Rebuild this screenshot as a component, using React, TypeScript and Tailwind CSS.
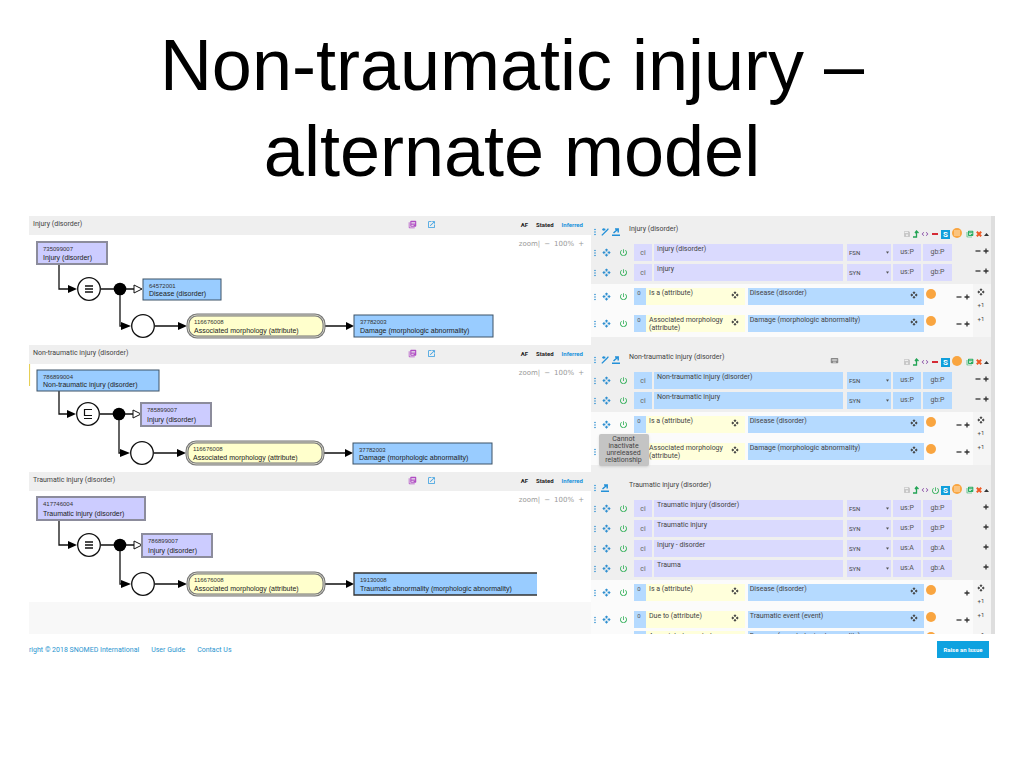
import type { ReactNode } from "react";
import {
  MdCode,
  MdKeyboard,
  MdLibraryBooks,
  MdMoreVert,
  MdOpenInNew,
  MdOpenWith,
  MdPowerSettingsNew,
  MdSave,
} from "react-icons/md";

type Fill = "lavender" | "sky";

type Box = { x: number; y: number; w: number; h: number; id: string; label: string; fill: Fill; open?: boolean };

type DiagramData = {
  title: string;
  height: number;
  shift: number;
  rowY: number;
  childY: number;
  subsumed?: boolean;
  marker?: boolean;
  boxes: Box[];
};

type Description = { term: string; type: string; us: string; gb: string };
type Relationship = { name: string; value: string; removable: boolean; tip?: string };

type Concept = {
  title: string;
  fill: Fill;
  wand: boolean;
  keyboard?: boolean;
  defined: boolean;
  power?: boolean;
  removable: boolean;
  descriptions: Description[];
  groups: Relationship[][];
};

const diagrams: DiagramData[] = [
  {
    title: "Injury (disorder)",
    height: 110,
    shift: 0,
    rowY: 54,
    childY: 91,
    boxes: [
      { x: 8, y: 7, w: 70, h: 22, id: "735099007", label: "Injury (disorder)", fill: "lavender" },
      { x: 114, y: 44, w: 78, h: 21, id: "64572001", label: "Disease (disorder)", fill: "sky" },
      { x: 325, y: 80, w: 139, h: 22, id: "37782003", label: "Damage (morphologic abnormality)", fill: "sky" },
    ],
  },
  {
    title: "Non-traumatic injury (disorder)",
    height: 108,
    shift: -1,
    rowY: 50,
    childY: 89,
    subsumed: true,
    marker: true,
    boxes: [
      { x: 8, y: 6, w: 122, h: 21, id: "786899004", label: "Non-traumatic injury (disorder)", fill: "sky" },
      { x: 112, y: 39, w: 70, h: 23, id: "785899007", label: "Injury (disorder)", fill: "lavender" },
      { x: 324, y: 79, w: 139, h: 21, id: "37782003", label: "Damage (morphologic abnormality)", fill: "sky" },
    ],
  },
  {
    title: "Traumatic injury (disorder)",
    height: 111,
    shift: 0,
    rowY: 54,
    childY: 93,
    boxes: [
      { x: 8, y: 6, w: 108, h: 23, id: "417746004", label: "Traumatic injury (disorder)", fill: "lavender" },
      { x: 113, y: 43, w: 70, h: 23, id: "786899007", label: "Injury (disorder)", fill: "lavender" },
      { x: 325, y: 82, w: 183, h: 22, id: "19130008", label: "Traumatic abnormality (morphologic abnormality)", fill: "sky", open: true },
    ],
  },
];

const isA: Relationship = { name: "Is a (attribute)", value: "Disease (disorder)", removable: true };
const morphology: Relationship = {
  name: "Associated morphology (attribute)",
  value: "Damage (morphologic abnormality)",
  removable: true,
};

const concepts: Concept[] = [
  {
    title: "Injury (disorder)",
    fill: "lavender",
    wand: true,
    defined: true,
    removable: true,
    descriptions: [
      { term: "Injury (disorder)", type: "FSN", us: "P", gb: "P" },
      { term: "Injury", type: "SYN", us: "P", gb: "P" },
    ],
    groups: [[isA], [morphology]],
  },
  {
    title: "Non-traumatic injury (disorder)",
    fill: "sky",
    wand: true,
    keyboard: true,
    defined: false,
    removable: true,
    descriptions: [
      { term: "Non-traumatic injury (disorder)", type: "FSN", us: "P", gb: "P" },
      { term: "Non-traumatic injury", type: "SYN", us: "P", gb: "P" },
    ],
    groups: [[{ ...isA, tip: "Cannot inactivate unreleased relationship" }], [morphology]],
  },
  {
    title: "Traumatic injury (disorder)",
    fill: "lavender",
    wand: false,
    defined: true,
    power: true,
    removable: false,
    descriptions: [
      { term: "Traumatic injury (disorder)", type: "FSN", us: "P", gb: "P" },
      { term: "Traumatic injury", type: "SYN", us: "P", gb: "P" },
      { term: "Injury - disorder", type: "SYN", us: "A", gb: "A" },
      { term: "Trauma", type: "SYN", us: "A", gb: "A" },
    ],
    groups: [
      [{ ...isA, removable: false }],
      [{ name: "Due to (attribute)", value: "Traumatic event (event)", removable: true }, morphology],
    ],
  },
];

const fieldFill = { lavender: "bg-[#dadafe]", sky: "bg-[#b5daff]" };

function IconButton({ label, className = "", children }: { label: string; className?: string; children: ReactNode }) {
  return (
    <button type="button" aria-label={label} className={`flex shrink-0 items-center justify-center ${className}`}>
      {children}
    </button>
  );
}

function DiagramBox({ x, y, w, h, id, label, fill, open }: Box) {
  const lavender = fill === "lavender";
  return (
    <g>
      <rect
        x={x}
        y={y}
        width={w}
        height={h}
        fill={lavender ? "#ccccff" : "#99ccff"}
        stroke={open ? "none" : lavender ? "#8c8c9c" : "#3d5266"}
        strokeWidth={lavender ? 2 : 1}
      />
      {open && <path d={`M${x + w} ${y}H${x}V${y + h}H${x + w}`} fill="none" stroke="#333" strokeWidth="1.3" />}
      <text x={x + 6} y={y + 9} fontSize="6" fill="#333">{id}</text>
      <text x={x + 6} y={y + h - 4} fontSize="7" fill="#222">{label}</text>
    </g>
  );
}

function Diagram({ height, shift, rowY, childY, subsumed, marker, boxes }: DiagramData) {
  const left = 60 + shift;
  const dot = 91 + shift;
  const child = 114 + shift;
  const pill = 159 + shift;
  const top = boxes[0].y + boxes[0].h;
  return (
    <svg width="560" height={height} viewBox={`0 0 560 ${height}`} className="block font-['Liberation_Sans',sans-serif]">
      {marker && <path d="M0.5 0V22" stroke="#e6cf55" strokeWidth="1.2" />}
      <g fill="none" stroke="#111" strokeWidth="1.3">
        <path d={`M30 ${top}V${rowY}H40`} />
        <circle cx={left} cy={rowY} r="11.3" fill="#fff" />
        <path d={`M${left + 12} ${rowY}H${dot}V${childY}H${dot + 4}M${dot} ${rowY}H${dot + 14}`} />
        <path d={`M${dot + 14} ${rowY - 4}L${dot + 22} ${rowY}L${dot + 14} ${rowY + 4}Z`} fill="#fff" strokeWidth="1" />
        <circle cx={child} cy={childY} r="11.3" fill="#fff" />
        <path d={`M${child + 12} ${childY}H${pill - 8}M${pill + 136} ${childY}H${pill + 158}`} />
        {subsumed ? (
          <path d={`M${left + 4} ${rowY - 4.5}H${left - 3.5}V${rowY + 1.5}H${left + 4}M${left - 4} ${rowY + 4.5}H${left + 4}`} strokeWidth="1.2" />
        ) : (
          <path d={`M${left - 4} ${rowY - 3}h8m-8 3h8m-8 3h8`} />
        )}
      </g>
      <g fill="#000">
        <circle cx={dot} cy={rowY} r="6.3" />
        <path d={`M${left - 21} ${rowY - 4}l9 4l-9 4z`} />
        <path d={`M${dot + 1} ${childY - 4}l10 4l-10 4z`} />
        <path d={`M${pill - 10} ${childY - 4}l9 4l-9 4z`} />
        <path d={`M${pill + 158} ${childY - 4}l8 4l-8 4z`} />
      </g>
      <rect x={pill} y={childY - 11} width="136" height="22" rx="9" fill="#ffffcc" stroke="#777" strokeWidth="3" />
      <rect x={pill} y={childY - 11} width="136" height="22" rx="9" fill="none" stroke="#d5d5c8" strokeWidth="1" />
      <text x={pill + 6} y={childY - 2} fontSize="6" fill="#333">116676008</text>
      <text x={pill + 6} y={childY + 7} fontSize="7" fill="#222">Associated morphology (attribute)</text>
      {boxes.map((box) => (
        <DiagramBox key={box.x} {...box} />
      ))}
    </svg>
  );
}

function DiagramCard(props: DiagramData) {
  return (
    <section className="relative overflow-hidden bg-white">
      <header className="flex h-[19px] items-center bg-[#efefef] pb-[2px] pl-1 pr-2">
        <h2 className="flex-1 pb-[2px] text-[7px] leading-[8px] text-[#444]">{props.title}</h2>
        <div className="flex items-center gap-[10px]">
          <IconButton label="Copy" className="text-[9px] text-[#b04cc4]"><MdLibraryBooks /></IconButton>
          <IconButton label="Open" className="text-[9px] text-[#2f9be0]"><MdOpenInNew /></IconButton>
        </div>
        <nav className="ml-[85px] flex gap-2 text-[6px] leading-[8px] font-bold text-[#222]">
          <button type="button">AF</button>
          <button type="button">Stated</button>
          <button type="button" className="text-[#1a93dc]">Inferred</button>
        </nav>
      </header>
      <Diagram {...props} />
      <div className="absolute right-[7px] top-6 flex items-center gap-1 font-['DejaVu_Sans',sans-serif] text-[7px] leading-[9px] text-[#999]">
        <span>zoom|</span>
        <button type="button">−</button>
        <span>100%</span>
        <button type="button">+</button>
      </div>
    </section>
  );
}

function RowTools({ tip }: { tip?: string }) {
  return (
    <div className="flex w-[43px] shrink-0 items-center text-[#2f8fd0]">
      <IconButton label="More" className="w-[7px] text-[10px]"><MdMoreVert className="shrink-0" /></IconButton>
      <IconButton label="Move" className="ml-1 w-2 text-[9px]"><MdOpenWith className="shrink-0" /></IconButton>
      <div className="relative ml-[9px]">
        <IconButton label="Inactivate" className="text-[9px] text-[#22aa4c]"><MdPowerSettingsNew /></IconButton>
        {tip && (
          <p role="tooltip" className="absolute left-1/2 top-[14px] z-10 w-[50px] -translate-x-1/2 rounded-[2px] bg-[#c4c4c4] px-1 py-[2px] text-center text-[7px] leading-[7px] text-[#444] shadow">
            {tip}
          </p>
        )}
      </div>
    </div>
  );
}

function PlusMinus({ removable }: { removable: boolean }) {
  return (
    <div className="flex shrink-0 items-center gap-[2px] text-[#333]">
      {removable && (
        <IconButton label="Remove">
          <svg width="6" height="6" viewBox="0 0 6 6"><path d="M0.5 3H5.5" stroke="currentColor" strokeWidth="1.3" /></svg>
        </IconButton>
      )}
      <IconButton label="Add">
        <svg width="6" height="6" viewBox="0 0 6 6"><path d="M0.5 3H5.5M3 0.5V5.5" stroke="currentColor" strokeWidth="1.3" /></svg>
      </IconButton>
    </div>
  );
}

function DescriptionRow({ row, fill, removable }: { row: Description; fill: Fill; removable: boolean }) {
  const bg = fieldFill[fill];
  return (
    <div className="mb-[3px] flex h-[17px] items-center gap-[2px] pr-[2px]">
      <div className="-mr-[2px]"><RowTools /></div>
      <button type="button" className={`h-full w-[18px] shrink-0 text-[7px] leading-[8px] text-[#666] ${bg}`}>ci</button>
      <textarea aria-label="Term" defaultValue={row.term} className={`h-full min-w-0 flex-1 resize-none overflow-hidden px-[3px] py-[1px] text-[7px] leading-[8px] text-[#444] ${bg}`} />
      <div className={`ml-[2px] flex h-full w-[44px] shrink-0 items-center px-[2px] ${bg}`}>
        <select aria-label="Type" defaultValue={row.type} className="h-full min-w-0 flex-1 appearance-none text-[6px] text-[#444]">
          <option>FSN</option>
          <option>SYN</option>
        </select>
        <svg width="3" height="3" viewBox="0 0 4 3" className="shrink-0"><path d="M0 0H4L2 3Z" fill="#555" /></svg>
      </div>
      <button type="button" className={`h-full w-[28px] shrink-0 text-[7px] text-[#555] ${bg}`}>us:{row.us}</button>
      <button type="button" className={`h-full w-[29px] shrink-0 text-[7px] text-[#555] ${bg}`}>gb:{row.gb}</button>
      <div className="flex w-[35px] shrink-0 justify-end pb-1"><PlusMinus removable={removable} /></div>
    </div>
  );
}

function RelationshipRow({ row, first }: { row: Relationship; first: boolean }) {
  return (
    <div className="flex h-[17px]">
      <RowTools tip={row.tip} />
      <span className="w-3 shrink-0 bg-[#b5daff] pr-[2px] pt-[1px] text-center text-[6px] leading-[8px] text-[#555]">0</span>
      <div className="flex min-w-0 flex-[97] items-start bg-[#ffffdb] pr-[6px]">
        <textarea aria-label="Attribute" defaultValue={row.name} className="h-full min-w-0 flex-1 resize-none overflow-hidden py-[1px] pl-[3px] text-[7px] leading-[8px] text-[#444]" />
        <IconButton label="Drag attribute" className="mt-[3px] text-[8px] text-[#444]"><MdOpenWith /></IconButton>
      </div>
      <div className="ml-[3px] flex min-w-0 flex-[178] items-start bg-[#b5daff] pr-[6px]">
        <textarea aria-label="Value" defaultValue={row.value} className="h-full min-w-0 flex-1 resize-none overflow-hidden py-[1px] pl-[2px] text-[7px] leading-[8px] text-[#444]" />
        <IconButton label="Drag value" className="mt-[3px] text-[8px] text-[#444]"><MdOpenWith /></IconButton>
      </div>
      <span className="ml-[2px] mt-[1px] size-[10px] shrink-0 rounded-full bg-[#f9a540]" />
      <div className="flex w-[37px] shrink-0 justify-end pr-[3px]"><PlusMinus removable={row.removable} /></div>
      <div className="flex w-[18px] shrink-0 flex-col items-center gap-[5px] pr-[2px] text-[6px] leading-[8px] text-[#444]">
        {first && <IconButton label="Move group" className="text-[8px]"><MdOpenWith /></IconButton>}
        <button type="button">+1</button>
      </div>
    </div>
  );
}

function ConceptToolbar({ defined, power }: { defined: boolean; power?: boolean }) {
  return (
    <div className="mt-[13px] flex h-[10px] shrink-0 items-center gap-[2px] pr-[2px]">
      <IconButton label="Save" className="text-[8px] text-[#c8c8c8]"><MdSave /></IconButton>
      <IconButton label="Promote" className="w-[6px]">
        <svg width="6" height="8" viewBox="0 0 6 8"><path d="M0 7H3.5V1M2 3L3.5 1L5.5 3" fill="none" stroke="#23a455" strokeWidth="1.3" /></svg>
      </IconButton>
      <IconButton label="Expression" className="w-2 text-[8px] text-[#8040a0]"><MdCode /></IconButton>
      {power ? (
        <IconButton label="Inactivate concept" className="w-2 text-[9px] text-[#22aa4c]"><MdPowerSettingsNew className="shrink-0" /></IconButton>
      ) : (
        <IconButton label="Delete concept" className="w-2"><span className="h-[2px] w-[6px] bg-[#d52b35]" /></IconButton>
      )}
      <IconButton label="Stated" className="size-[9px] bg-[#119fdb] text-[8px] leading-[9px] font-bold text-white">S</IconButton>
      <IconButton label="Definition status" className="mb-[2px] size-[10px] rounded-full bg-[#f9a540]">
        {defined && <svg width="6" height="6" viewBox="0 0 6 6"><path d="M0 1H6M0 3H6M0 5H6" stroke="#fff4df" strokeWidth="0.8" /></svg>}
      </IconButton>
      <IconButton label="Clone" className="ml-[2px] text-[8px] text-[#29ad62]"><MdLibraryBooks /></IconButton>
      <IconButton label="Close" className="w-[6px]">
        <svg width="6" height="6" viewBox="0 0 6 6"><path d="M0.8 0.8L5.2 5.2M5.2 0.8L0.8 5.2" stroke="#ee5a24" strokeWidth="2" /></svg>
      </IconButton>
      <IconButton label="Collapse" className="w-[5px]">
        <svg width="5" height="3" viewBox="0 0 5 3"><path d="M0 3L2.5 0L5 3Z" fill="#333" /></svg>
      </IconButton>
    </div>
  );
}

function ConceptPanel(concept: Concept) {
  return (
    <section className="pb-[7px]">
      <header className="flex h-7 items-start">
        <div className="mt-[11px] flex w-[38px] shrink-0 items-center gap-[3px] text-[#2390d8]">
          <IconButton label="More" className="w-[7px] text-[10px]"><MdMoreVert className="shrink-0" /></IconButton>
          {concept.wand && (
            <IconButton label="Template">
              <svg width="8" height="8" viewBox="0 0 8 8"><path d="M0.8 7.4L6 2.2L7.4 0.6M1.2 1.5H4.4M2.8 0.3V2.8" fill="none" stroke="currentColor" strokeWidth="1.3" /></svg>
            </IconButton>
          )}
          <IconButton label="Open concept">
            <svg width="8" height="8" viewBox="0 0 8 8"><path d="M0 7.2H8M1.5 5L5.5 1.5M3 1H6.2V4.5" fill="none" stroke="currentColor" strokeWidth="1.5" /></svg>
          </IconButton>
        </div>
        <h2 className="mt-[9px] flex-1 text-[7px] leading-[9px] text-[#444]">{concept.title}</h2>
        {concept.keyboard && <MdKeyboard className="mr-[64px] mt-[12px] text-[9px] text-[#888]" />}
        <ConceptToolbar defined={concept.defined} power={concept.power} />
      </header>
      {concept.descriptions.map((row) => (
        <DescriptionRow key={row.term} row={row} fill={concept.fill} removable={concept.removable} />
      ))}
      <div className="flex flex-col gap-[10px] bg-[#fbfbfb] bg-[linear-gradient(to_left,#f5f5f5_18px,transparent_18px)] pb-[5px] pt-1">
        {concept.groups.map((group, index) => (
          <div key={index} className="flex flex-col gap-[3px]">
            {group.map((row) => (
              <RelationshipRow key={row.name} row={row} first={index === 0} />
            ))}
          </div>
        ))}
      </div>
    </section>
  );
}

export default function App() {
  return (
    <main className="min-h-screen bg-white px-[29px] pt-[22px] font-[Roboto,sans-serif]">
      <h1 className="mx-auto max-w-[800px] text-center font-['Liberation_Sans',sans-serif] text-[72px] leading-[86px] text-black">
        Non-traumatic injury – alternate model
      </h1>

      <div className="mt-[22px] flex h-[418px] overflow-hidden">
        {/* Concept diagrams */}
        <div className="min-w-0 flex-1 bg-[#f8f8f8]">
          {diagrams.map((diagram) => (
            <DiagramCard key={diagram.title} {...diagram} />
          ))}
        </div>

        {/* Concept editing */}
        <div className="w-[404px] shrink-0 overflow-hidden border-r-4 border-[#dedede] bg-[#efefef]">
          {concepts.map((concept) => (
            <ConceptPanel key={concept.title} {...concept} />
          ))}
        </div>
      </div>

      <footer className="flex items-center justify-between pr-[6px] pt-[7px] text-[7px] leading-[8px] text-[#2a95cf]">
        <div className="flex gap-3">
          <a href="#copyright">right © 2018 SNOMED International</a>
          <a href="#guide">User Guide</a>
          <a href="#contact">Contact Us</a>
        </div>
        <button type="button" className="h-[17px] w-[52px] bg-[#0ea2e0] text-[6px] font-bold text-white">Raise an Issue</button>
      </footer>
    </main>
  );
}
